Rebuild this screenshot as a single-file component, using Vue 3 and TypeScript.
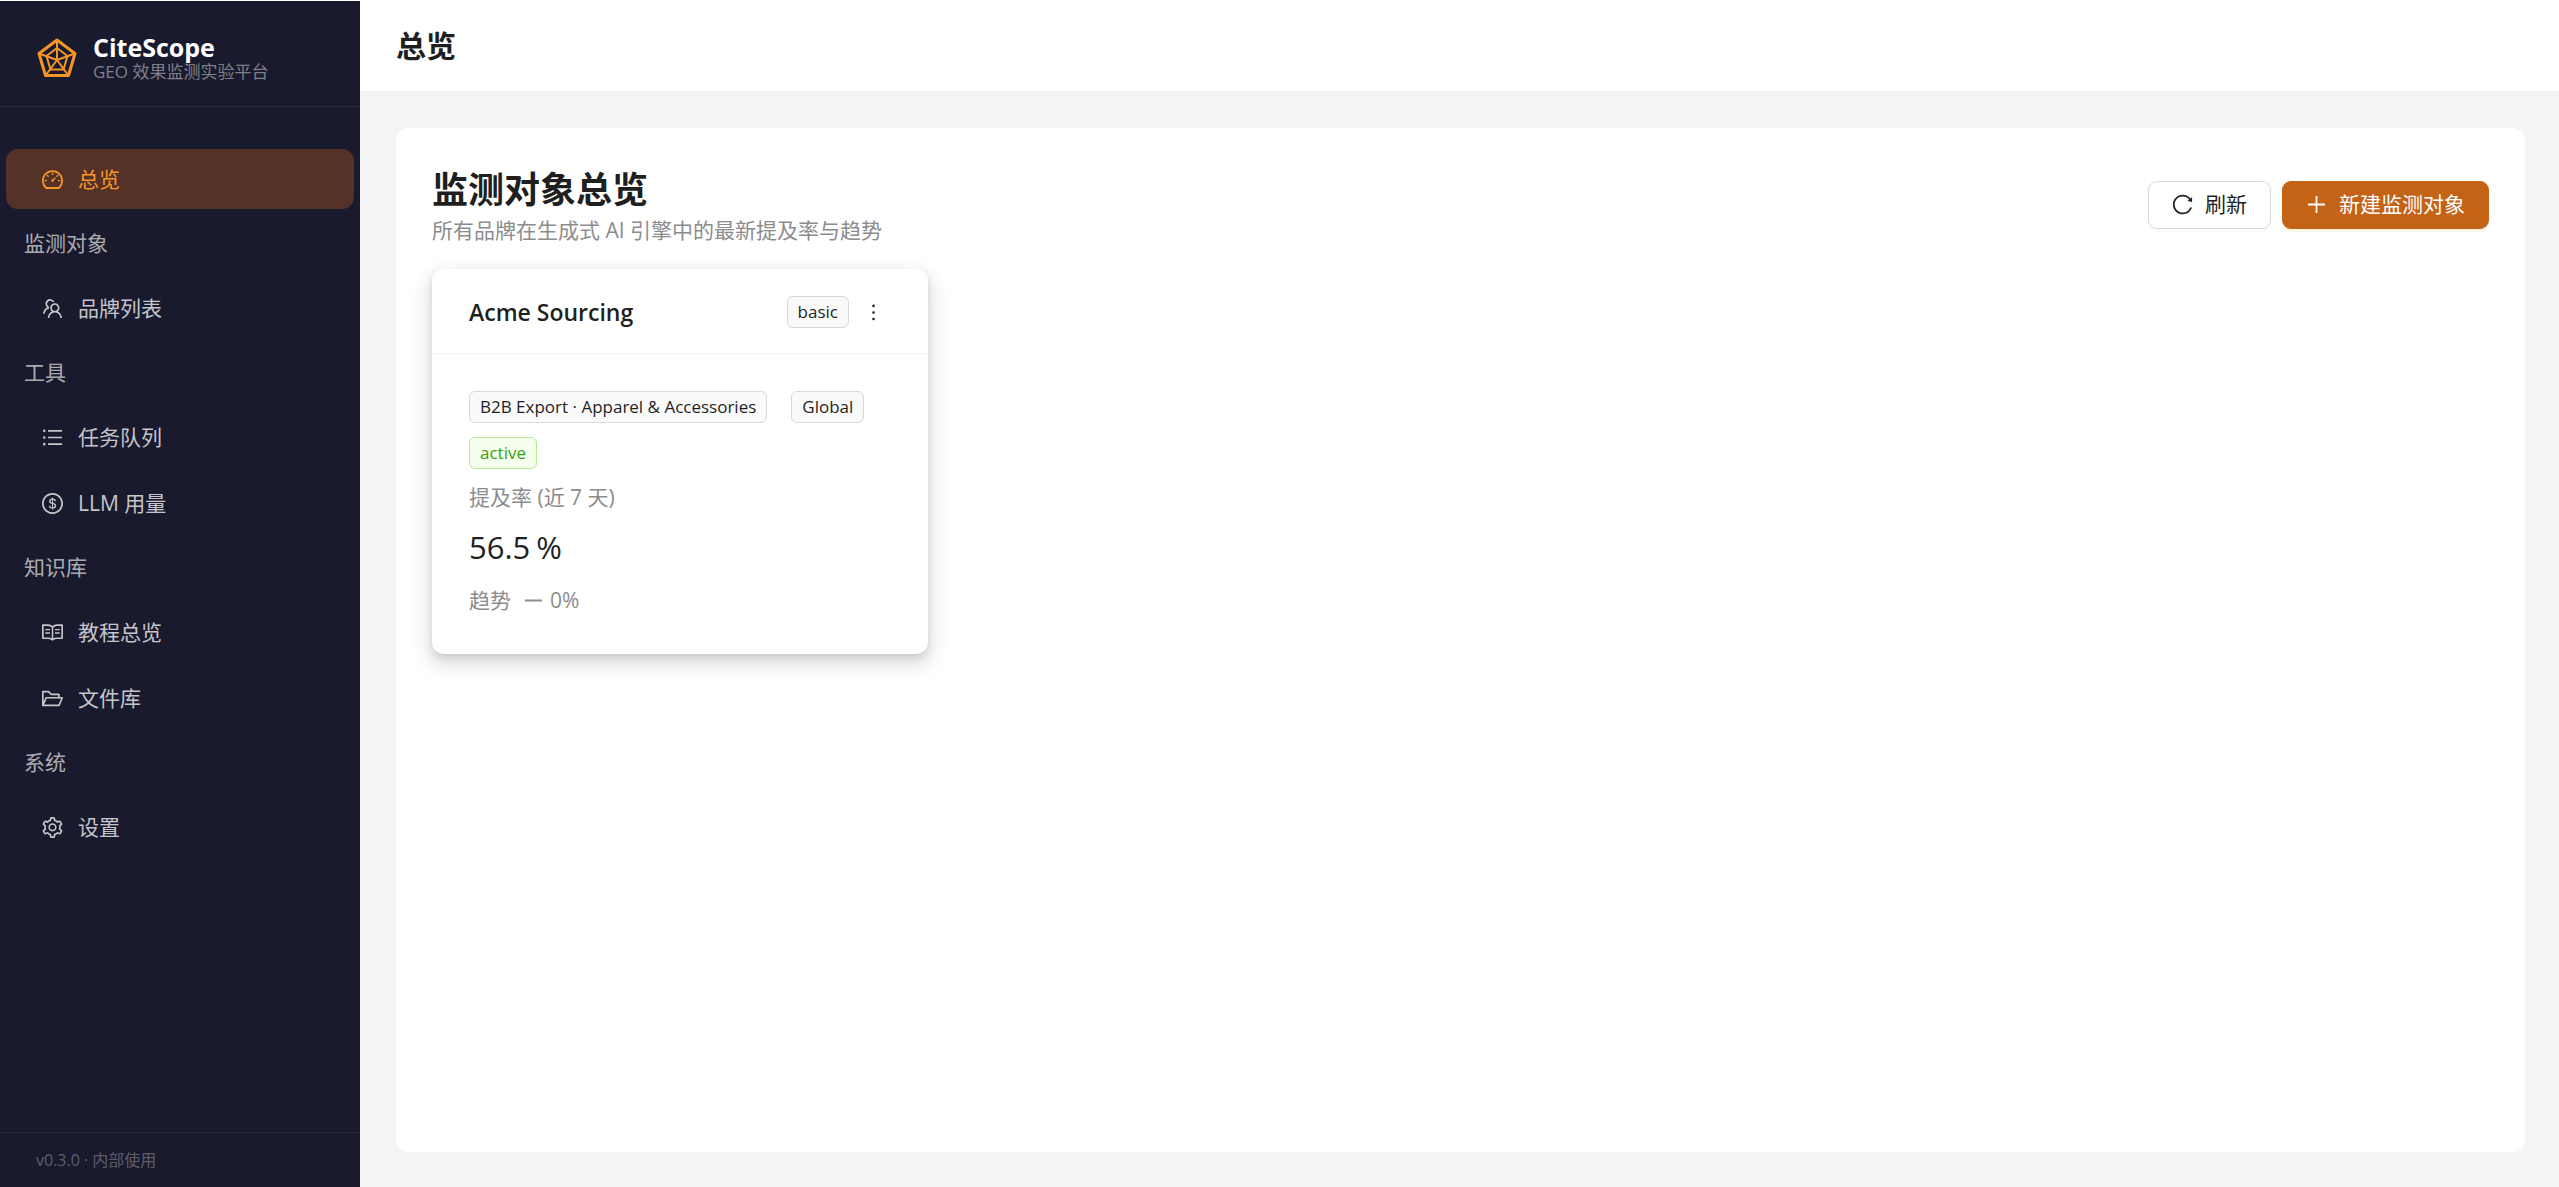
<script setup lang="ts">
interface MenuItem {
  label: string
  icon: string
  active?: boolean
}
interface MenuGroup {
  title: string
  items: MenuItem[]
}

const icons: Record<string, string> = {
  dashboard:
    'M924.8 385.6a446.7 446.7 0 00-96-142.4 446.7 446.7 0 00-142.4-96C631.1 123.8 572.5 112 512 112s-119.1 11.8-174.4 35.2a446.7 446.7 0 00-142.4 96 446.7 446.7 0 00-96 142.4C75.8 440.9 64 499.5 64 560c0 132.7 58.3 257.7 159.9 343.1l1.7 1.4c5.8 4.8 13.1 7.5 20.6 7.5h531.7c7.5 0 14.8-2.7 20.6-7.5l1.7-1.4C901.7 817.7 960 692.7 960 560c0-60.5-11.9-119.1-35.2-174.4zM761.4 836H262.6A371.12 371.12 0 01140 560c0-99.4 38.7-192.8 109-263 70.3-70.3 163.7-109 263-109 99.4 0 192.8 38.7 263 109 70.3 70.3 109 163.7 109 263 0 105.6-44.5 205.5-122.6 276zM623.5 421.5a8.03 8.03 0 00-11.3 0L527.7 506c-18.7-5-39.4-.2-54.1 14.5a55.95 55.95 0 000 79.2 55.95 55.95 0 0079.2 0 55.87 55.87 0 0014.5-54.1l84.5-84.5c3.1-3.1 3.1-8.2 0-11.3l-28.3-28.3zM490 320h44c4.4 0 8-3.6 8-8v-80c0-4.4-3.6-8-8-8h-44c-4.4 0-8 3.6-8 8v80c0 4.4 3.6 8 8 8zm260 218v44c0 4.4 3.6 8 8 8h80c4.4 0 8-3.6 8-8v-44c0-4.4-3.6-8-8-8h-80c-4.4 0-8 3.6-8 8zm12.7-197.2l-31.1-31.1a8.03 8.03 0 00-11.3 0l-56.6 56.6a8.03 8.03 0 000 11.3l31.1 31.1c3.1 3.1 8.2 3.1 11.3 0l56.6-56.6c3.1-3.1 3.1-8.2 0-11.3zm-458.6-31.1a8.03 8.03 0 00-11.3 0l-31.1 31.1a8.03 8.03 0 000 11.3l56.6 56.6c3.1 3.1 8.2 3.1 11.3 0l31.1-31.1c3.1-3.1 3.1-8.2 0-11.3l-56.6-56.6zM262 530h-80c-4.4 0-8 3.6-8 8v44c0 4.4 3.6 8 8 8h80c4.4 0 8-3.6 8-8v-44c0-4.4-3.6-8-8-8z',
  team:
    'M824.2 699.9a301.55 301.55 0 00-86.4-60.4C783.1 602.8 812 546.8 812 484c0-110.8-92.4-201.7-203.2-200-109.1 1.7-197 90.6-197 200 0 62.8 29 118.8 74.2 155.5a300.95 300.95 0 00-86.4 60.4C345 754.6 314 826.8 312 903.8a8 8 0 008 8.2h56c4.3 0 7.9-3.4 8-7.7 1.9-58 25.4-112.3 66.7-153.5A226.62 226.62 0 01612 684c60.9 0 118.2 23.7 161.3 66.8C814.6 792 838 846.3 840 904.3c.1 4.3 3.7 7.7 8 7.7h56a8 8 0 008-8.2c-2-77-33-149.2-87.8-203.9zM612 612c-34.2 0-66.4-13.3-90.5-37.5a126.86 126.86 0 01-37.5-91.8c.3-32.8 13.4-64.5 36.3-88 24-24.6 56.1-38.3 90.4-38.7 33.9-.3 66.8 12.9 91 36.6 24.8 24.3 38.4 56.8 38.4 91.4 0 34.2-13.3 66.3-37.5 90.5A127.3 127.3 0 01612 612zM361.5 510.4c-.9-8.7-1.4-17.5-1.4-26.4 0-15.9 1.5-31.4 4.3-46.5.7-3.6-1.2-7.3-4.5-8.8-13.6-6.1-26.1-14.5-36.9-25.1a127.54 127.54 0 01-38.7-95.4c.9-32.1 13.8-62.6 36.3-85.6 24.7-25.3 57.9-39.1 93.2-38.7 31.9.3 62.7 12.6 86 34.4 7.9 7.4 14.7 15.6 20.4 24.4 2 3.1 5.9 4.4 9.3 3.2 17.6-6.1 36.2-10.4 55.3-12.4 5.6-.6 8.8-6.6 6.3-11.6-32.5-64.3-98.9-108.7-175.7-109.9-110.9-1.7-203.3 89.2-203.3 199.9 0 62.8 28.9 118.8 74.2 155.5-31.8 14.7-61.1 35-86.5 60.4-54.8 54.7-85.8 126.9-87.8 204a8 8 0 008 8.2h56.1c4.3 0 7.9-3.4 8-7.7 1.9-58 25.4-112.3 66.7-153.5 29.4-29.4 65.4-49.8 104.7-59.7 3.9-1 6.5-4.7 6-8.7z',
  list:
    'M912 192H328c-4.4 0-8 3.6-8 8v56c0 4.4 3.6 8 8 8h584c4.4 0 8-3.6 8-8v-56c0-4.4-3.6-8-8-8zm0 284H328c-4.4 0-8 3.6-8 8v56c0 4.4 3.6 8 8 8h584c4.4 0 8-3.6 8-8v-56c0-4.4-3.6-8-8-8zm0 284H328c-4.4 0-8 3.6-8 8v56c0 4.4 3.6 8 8 8h584c4.4 0 8-3.6 8-8v-56c0-4.4-3.6-8-8-8zM104 228a56 56 0 10112 0 56 56 0 10-112 0zm0 284a56 56 0 10112 0 56 56 0 10-112 0zm0 284a56 56 0 10112 0 56 56 0 10-112 0z',
  dollar:
    'M512 64C264.6 64 64 264.6 64 512s200.6 448 448 448 448-200.6 448-448S759.4 64 512 64zm0 820c-205.4 0-372-166.6-372-372s166.6-372 372-372 372 166.6 372 372-166.6 372-372 372zm47.7-395.2l-25.4-5.9V348.6c38 5.2 61.5 29 65.5 58.2.5 4 3.9 6.9 7.9 6.9h44.9c4.7 0 8.4-4.1 8-8.8-6.1-62.3-57.4-102.3-125.9-109.2V263c0-4.4-3.6-8-8-8h-28.1c-4.4 0-8 3.6-8 8v33c-70.8 6.9-126.2 46-126.2 119 0 67.6 49.8 100.2 102.1 112.7l24.7 6.3v142.7c-44.2-5.9-69-29.5-74.1-61.3-.6-3.8-4-6.6-7.9-6.6H363c-4.7 0-8.4 4-8 8.7 4.5 55 46.2 105.6 135.2 112.1V761c0 4.4 3.6 8 8 8h28.4c4.4 0 8-3.6 8-8.1l-.2-31.7c78.3-6.9 134.3-48.8 134.3-124-.1-69.4-44.2-100.4-109-116.4zm-68.6-16.2c-5.6-1.6-10.3-3.1-15-5-33.8-12.2-49.5-31.9-49.5-57.3 0-36.3 27.5-57 64.5-61.7v124zM534.3 677V543.3c3.1.9 5.9 1.6 8.8 2.2 47.3 14.4 63.2 34.4 63.2 65.1 0 39.1-29.4 62.6-72 66.4z',
  read:
    'M928 161H699.2c-49.1 0-97.1 14.1-138.4 40.7L512 233l-48.8-31.3A255.2 255.2 0 00324.8 161H96c-17.7 0-32 14.3-32 32v568c0 17.7 14.3 32 32 32h228.8c49.1 0 97.1 14.1 138.4 40.7l44.4 28.6c1.3.8 2.8 1.3 4.3 1.3s3-.4 4.3-1.3l44.4-28.6C602 807.1 650.1 793 699.2 793H928c17.7 0 32-14.3 32-32V193c0-17.7-14.3-32-32-32zM324.8 721H136V233h188.8c35.4 0 69.8 10.1 99.5 29.2l48.8 31.3 6.9 4.5v462c-47.6-25.6-100.8-39-155.2-39zm563.2 0H699.2c-54.4 0-107.6 13.4-155.2 39V298l6.9-4.5 48.8-31.3c29.7-19.1 64.1-29.2 99.5-29.2H888v488zM396.9 361H211.1c-3.9 0-7.1 3.4-7.1 7.5v45c0 4.1 3.2 7.5 7.1 7.5h185.7c3.9 0 7.1-3.4 7.1-7.5v-45c.1-4.1-3.1-7.5-7-7.5zm223.1 7.5v45c0 4.1 3.2 7.5 7.1 7.5h185.7c3.9 0 7.1-3.4 7.1-7.5v-45c0-4.1-3.2-7.5-7.1-7.5H627.1c-3.9 0-7.1 3.4-7.1 7.5zM396.9 501H211.1c-3.9 0-7.1 3.4-7.1 7.5v45c0 4.1 3.2 7.5 7.1 7.5h185.7c3.9 0 7.1-3.4 7.1-7.5v-45c.1-4.1-3.1-7.5-7-7.5zm416 0H627.1c-3.9 0-7.1 3.4-7.1 7.5v45c0 4.1 3.2 7.5 7.1 7.5h185.7c3.9 0 7.1-3.4 7.1-7.5v-45c.1-4.1-3.1-7.5-7-7.5z',
  folder:
    'M928 444H820V330.4c0-17.7-14.3-32-32-32H473L355.7 186.2a8.15 8.15 0 00-5.5-2.2H96c-17.7 0-32 14.3-32 32v592c0 17.7 14.3 32 32 32h698c13 0 24.8-7.9 29.7-20l134-332c1.5-3.8 2.3-7.9 2.3-12 0-17.7-14.3-32-32-32zM136 256h188.5l119.6 114.4H748V444H238c-13 0-24.8 7.9-29.7 20L136 643.2V256zm635.3 512H159l103.3-256h612.4L771.3 768z',
  setting:
    'M924.8 625.7l-65.5-56c3.1-19 4.7-38.4 4.7-57.8s-1.6-38.8-4.7-57.8l65.5-56a32.03 32.03 0 009.3-35.2l-.9-2.6a443.74 443.74 0 00-79.7-137.9l-1.8-2.1a32.12 32.12 0 00-35.1-9.5l-81.3 28.9c-30-24.6-63.5-44-99.7-57.6l-15.7-85a32.05 32.05 0 00-25.8-25.7l-2.7-.5c-52.1-9.4-106.9-9.4-159 0l-2.7.5a32.05 32.05 0 00-25.8 25.7l-15.8 85.4a351.86 351.86 0 00-99 57.4l-81.9-29.1a32 32 0 00-35.1 9.5l-1.8 2.1a446.02 446.02 0 00-79.7 137.9l-.9 2.6c-4.5 12.5-.8 26.5 9.3 35.2l66.3 56.6c-3.1 18.8-4.6 38-4.6 57.1 0 19.2 1.5 38.4 4.6 57.1L99 625.5a32.03 32.03 0 00-9.3 35.2l.9 2.6c18.1 50.4 44.9 96.9 79.7 137.9l1.8 2.1a32.12 32.12 0 0035.1 9.5l81.9-29.1c29.8 24.5 63.1 43.9 99 57.4l15.8 85.4a32.05 32.05 0 0025.8 25.7l2.7.5a449.4 449.4 0 00159 0l2.7-.5a32.05 32.05 0 0025.8-25.7l15.7-85a350 350 0 0099.7-57.6l81.3 28.9a32 32 0 0035.1-9.5l1.8-2.1c34.8-41.1 61.6-87.5 79.7-137.9l.9-2.6c4.5-12.3.8-26.3-9.3-35zM788.3 465.9c2.5 15.1 3.8 30.6 3.8 46.1s-1.3 31-3.8 46.1l-6.6 40.1 74.7 63.9a370.03 370.03 0 01-42.6 73.6L721 702.8l-31.4 25.8c-23.9 19.6-50.5 35-79.3 45.8l-38.1 14.3-17.9 97a377.5 377.5 0 01-85 0l-17.9-97.2-37.8-14.5c-28.5-10.8-55-26.2-78.7-45.7l-31.4-25.9-93.4 33.2c-17-22.9-31.2-47.6-42.6-73.6l75.5-64.5-6.5-40c-2.4-14.9-3.7-30.3-3.7-45.5 0-15.3 1.2-30.6 3.7-45.5l6.5-40-75.5-64.5c11.3-26.1 25.6-50.7 42.6-73.6l93.4 33.2 31.4-25.9c23.7-19.5 50.2-34.9 78.7-45.7l37.9-14.3 17.9-97.2c28.1-3.2 56.8-3.2 85 0l17.9 97 38.1 14.3c28.7 10.8 55.4 26.2 79.3 45.8l31.4 25.8 92.8-32.9c17 22.9 31.2 47.6 42.6 73.6L781.8 426l6.5 39.9zM512 326c-97.2 0-176 78.8-176 176s78.8 176 176 176 176-78.8 176-176-78.8-176-176-176zm79.2 255.2A111.6 111.6 0 01512 614c-29.9 0-58-11.7-79.2-32.8A111.6 111.6 0 01400 502c0-29.9 11.7-58 32.8-79.2C454 401.6 482.1 390 512 390c29.9 0 58 11.6 79.2 32.8A111.6 111.6 0 01624 502c0 29.9-11.7 58-32.8 79.2z',
  reload:
    'M909.1 209.3l-56.4 44.1C775.8 155.1 656.2 92 521.9 92 290 92 102.3 279.5 102 511.5 101.7 743.7 289.8 932 521.9 932c181.3 0 335.8-115 394.6-276.1 1.5-4.2-.7-8.9-4.9-10.3l-56.7-19.5a8 8 0 00-10.1 4.8c-1.8 5-3.8 10-5.9 14.9-17.3 41-42.1 77.8-73.7 109.4A344.77 344.77 0 01655.9 829c-42.3 17.9-87.4 27-133.8 27-46.5 0-91.5-9.1-133.8-27A341.5 341.5 0 01279 755.2a342.16 342.16 0 01-73.7-109.4c-17.9-42.4-27-87.4-27-133.9s9.1-91.5 27-133.9c17.3-41 42.1-77.8 73.7-109.4 31.6-31.6 68.4-56.4 109.3-73.8 42.3-17.9 87.4-27 133.8-27 46.5 0 91.5 9.1 133.8 27a341.5 341.5 0 01109.3 73.8c9.9 9.9 19.2 20.4 27.8 31.4l-60.2 47a8 8 0 003 14.1l175.6 43c5 1.2 9.9-2.6 9.9-7.7l.8-180.9c-.1-6.6-7.8-10.3-13-6.2z',
  plus:
    'M482 152h60q8 0 8 8v704q0 8-8 8h-60q-8 0-8-8V160q0-8 8-8zM160 474h704q8 0 8 8v60q0 8-8 8H160q-8 0-8-8v-60q0-8 8-8z',
  more:
    'M456 231a56 56 0 10112 0 56 56 0 10-112 0zm0 280a56 56 0 10112 0 56 56 0 10-112 0zm0 280a56 56 0 10112 0 56 56 0 10-112 0z',
  minus:
    'M872 474H152c-4.4 0-8 3.6-8 8v60c0 4.4 3.6 8 8 8h720c4.4 0 8-3.6 8-8v-60c0-4.4-3.6-8-8-8z',
}

const groups: MenuGroup[] = [
  { title: '', items: [{ label: '总览', icon: 'dashboard', active: true }] },
  { title: '监测对象', items: [{ label: '品牌列表', icon: 'team' }] },
  {
    title: '工具',
    items: [
      { label: '任务队列', icon: 'list' },
      { label: 'LLM 用量', icon: 'dollar' },
    ],
  },
  {
    title: '知识库',
    items: [
      { label: '教程总览', icon: 'read' },
      { label: '文件库', icon: 'folder' },
    ],
  },
  { title: '系统', items: [{ label: '设置', icon: 'setting' }] },
]
</script>

<template>
  <div class="app">
    <aside class="sider">
      <div class="brand">
        <svg class="logo" viewBox="0 0 42 42" aria-hidden="true">
          <path d="M21 3 39 16.500 32.500 38.500H9.500L3 16.500z" />
          <path class="thin" d="M21 11 31.500 19 27.500 32.500H14.500L10.500 19z" />
          <path class="thin" d="M21 3V23M39 16.500 21 23M32.500 38.500 21 23M9.500 38.500 21 23M3 16.500 21 23" />
        </svg>
        <div>
          <div class="brand-name">CiteScope</div>
          <div class="brand-sub">GEO 效果监测实验平台</div>
        </div>
      </div>
      <nav class="menu">
        <div v-for="group in groups" :key="group.title" class="group">
          <div v-if="group.title" class="group-title">{{ group.title }}</div>
          <a
            v-for="item in group.items"
            :key="item.label"
            href="#"
            class="item"
            :class="{ active: item.active }"
          >
            <svg class="icon" viewBox="64 64 896 896" aria-hidden="true"><path :d="icons[item.icon]" /></svg>
            <span>{{ item.label }}</span>
          </a>
        </div>
      </nav>
      <div class="version">v0.3.0 · 内部使用</div>
    </aside>

    <div class="main">
      <header class="topbar">总览</header>
      <main class="panel">
        <div class="page-head">
          <div>
            <h1>监测对象总览</h1>
            <p>所有品牌在生成式 AI 引擎中的最新提及率与趋势</p>
          </div>
          <div class="actions">
            <button type="button" class="btn">
              <svg class="icon" viewBox="64 64 896 896" aria-hidden="true"><path :d="icons.reload" /></svg>
              <span>刷新</span>
            </button>
            <button type="button" class="btn primary">
              <svg class="icon" viewBox="64 64 896 896" aria-hidden="true"><path :d="icons.plus" /></svg>
              <span>新建监测对象</span>
            </button>
          </div>
        </div>

        <section class="card">
          <div class="card-head">
            <h2>Acme Sourcing</h2>
            <span class="tag">basic</span>
            <button type="button" class="more" aria-label="更多">
              <svg class="icon" viewBox="64 64 896 896" aria-hidden="true"><path :d="icons.more" /></svg>
            </button>
          </div>
          <div class="card-body">
            <div class="tags">
              <span class="tag">B2B Export · Apparel &amp; Accessories</span>
              <span class="tag">Global</span>
              <span class="tag green">active</span>
            </div>
            <div class="stat-title">提及率 (近 7 天)</div>
            <div class="stat-value"><span>56.5</span><span>%</span></div>
            <div class="trend">
              <span>趋势</span>
              <svg class="icon" viewBox="64 64 896 896" aria-hidden="true"><path :d="icons.minus" /></svg>
              <span>0%</span>
            </div>
          </div>
        </section>
      </main>
    </div>
  </div>
</template>

<style>
body {
  margin: 0;
  background: #fff;
}
</style>

<style scoped>
.app {
  display: flex;
  min-height: 100vh;
  box-sizing: border-box;
  padding-top: 1px;
  font-family: 'Open Sans', 'Noto Sans CJK SC', sans-serif;
  font-size: 21px;
  line-height: 33px;
  color: #1f1f1f;
}
.icon {
  width: 21px;
  height: 21px;
  flex: none;
  fill: currentColor;
}

/* Sidebar */
.sider {
  flex: none;
  width: 360px;
  display: flex;
  flex-direction: column;
  background: #1a1a2e;
  color: rgba(255, 255, 255, 0.75);
}
.brand {
  display: flex;
  align-items: center;
  gap: 15px;
  height: 97px;
  padding: 8px 36px 0;
  border-bottom: 1px solid rgba(255, 255, 255, 0.08);
}
.logo {
  flex: none;
  width: 42px;
  height: 42px;
  fill: none;
  stroke: #f59527;
  stroke-width: 3;
  stroke-linejoin: round;
}
.logo .thin {
  stroke-width: 2;
}
.brand-name {
  font-size: 25px;
  line-height: 27px;
  font-weight: 700;
  color: #fff;
}
.brand-sub {
  font-size: 17px;
  line-height: 21px;
  color: rgba(255, 255, 255, 0.45);
}
.menu {
  flex: 1;
  padding: 42px 6px 0;
}
.group {
  display: flex;
  flex-direction: column;
  gap: 6px;
  margin-bottom: 6px;
}
.group-title {
  padding: 12px 18px;
  color: rgba(255, 255, 255, 0.65);
}
.item {
  display: flex;
  align-items: center;
  gap: 15px;
  height: 60px;
  padding: 0 36px;
  border-radius: 12px;
  color: inherit;
  text-decoration: none;
}
.item.active {
  background: #553228;
  color: #f59527;
}
.version {
  padding: 12px 36px;
  border-top: 1px solid rgba(255, 255, 255, 0.06);
  font-size: 16px;
  line-height: 30px;
  color: rgba(255, 255, 255, 0.3);
}

/* Main area */
.main {
  flex: 1;
  min-width: 0;
  display: flex;
  flex-direction: column;
  background: #f4f4f4;
}
.topbar {
  height: 90px;
  padding: 0 36px;
  border-bottom: 1px solid #f0f0f0;
  background: #fff;
  font-size: 30px;
  line-height: 90px;
  font-weight: 700;
}
.panel {
  flex: 1;
  margin: 36px 34px 35px 36px;
  padding: 36px;
  border-radius: 12px;
  background: #fff;
}
.page-head {
  display: flex;
  align-items: center;
  justify-content: space-between;
  margin-bottom: 24px;
}
h1 {
  margin: 0;
  font-size: 36px;
  line-height: 51px;
  font-weight: 700;
}
p {
  margin: 0;
  line-height: 30px;
  color: #8c8c8c;
}
.actions {
  display: flex;
  gap: 11px;
}
.btn {
  display: flex;
  align-items: center;
  gap: 12px;
  height: 48px;
  padding: 0 23px;
  border: 1px solid #d9d9d9;
  border-radius: 9px;
  background: #fff;
  box-shadow: 0 3px 0 rgba(0, 0, 0, 0.02);
  font: inherit;
  color: inherit;
}
.btn.primary {
  border-color: #c46216;
  background: #c46216;
  box-shadow: 0 3px 0 rgba(255, 145, 5, 0.1);
  color: #fff;
}

/* Brand card */
.card {
  box-sizing: border-box;
  width: 496px;
  border-radius: 12px;
  background: #fff;
  box-shadow:
    0 2px 3px -3px rgba(0, 0, 0, 0.16),
    0 5px 9px rgba(0, 0, 0, 0.12),
    0 8px 18px 6px rgba(0, 0, 0, 0.09);
}
.card-head {
  display: flex;
  align-items: center;
  gap: 6px;
  height: 82px;
  padding: 2px 37px 0;
  border-bottom: 1px solid #f0f0f0;
}
h2 {
  flex: 1;
  margin: 0;
  font-size: 23px;
  line-height: 36px;
  font-weight: 600;
}
.tag {
  padding: 0 10px;
  border: 1px solid #d9d9d9;
  border-radius: 6px;
  background: #fafafa;
  font-size: 17px;
  line-height: 30px;
}
.tag.green {
  border-color: #b7eb8f;
  background: #f6ffed;
  color: #389e0d;
}
.more {
  display: flex;
  align-items: center;
  justify-content: center;
  width: 36px;
  height: 36px;
  padding: 0;
  border: 0;
  background: none;
  color: inherit;
}
.card-body {
  padding: 37px;
}
.tags {
  display: flex;
  flex-wrap: wrap;
  gap: 14px 24px;
}
.stat-title {
  margin-top: 12px;
  color: #8c8c8c;
}
.stat-value {
  display: flex;
  gap: 6px;
  margin-top: 8px;
  font-size: 31px;
  line-height: 50px;
}
.trend {
  display: flex;
  align-items: center;
  gap: 6px;
  margin-top: 12px;
  color: #8c8c8c;
}
.trend .icon {
  margin-left: 6px;
}
</style>
